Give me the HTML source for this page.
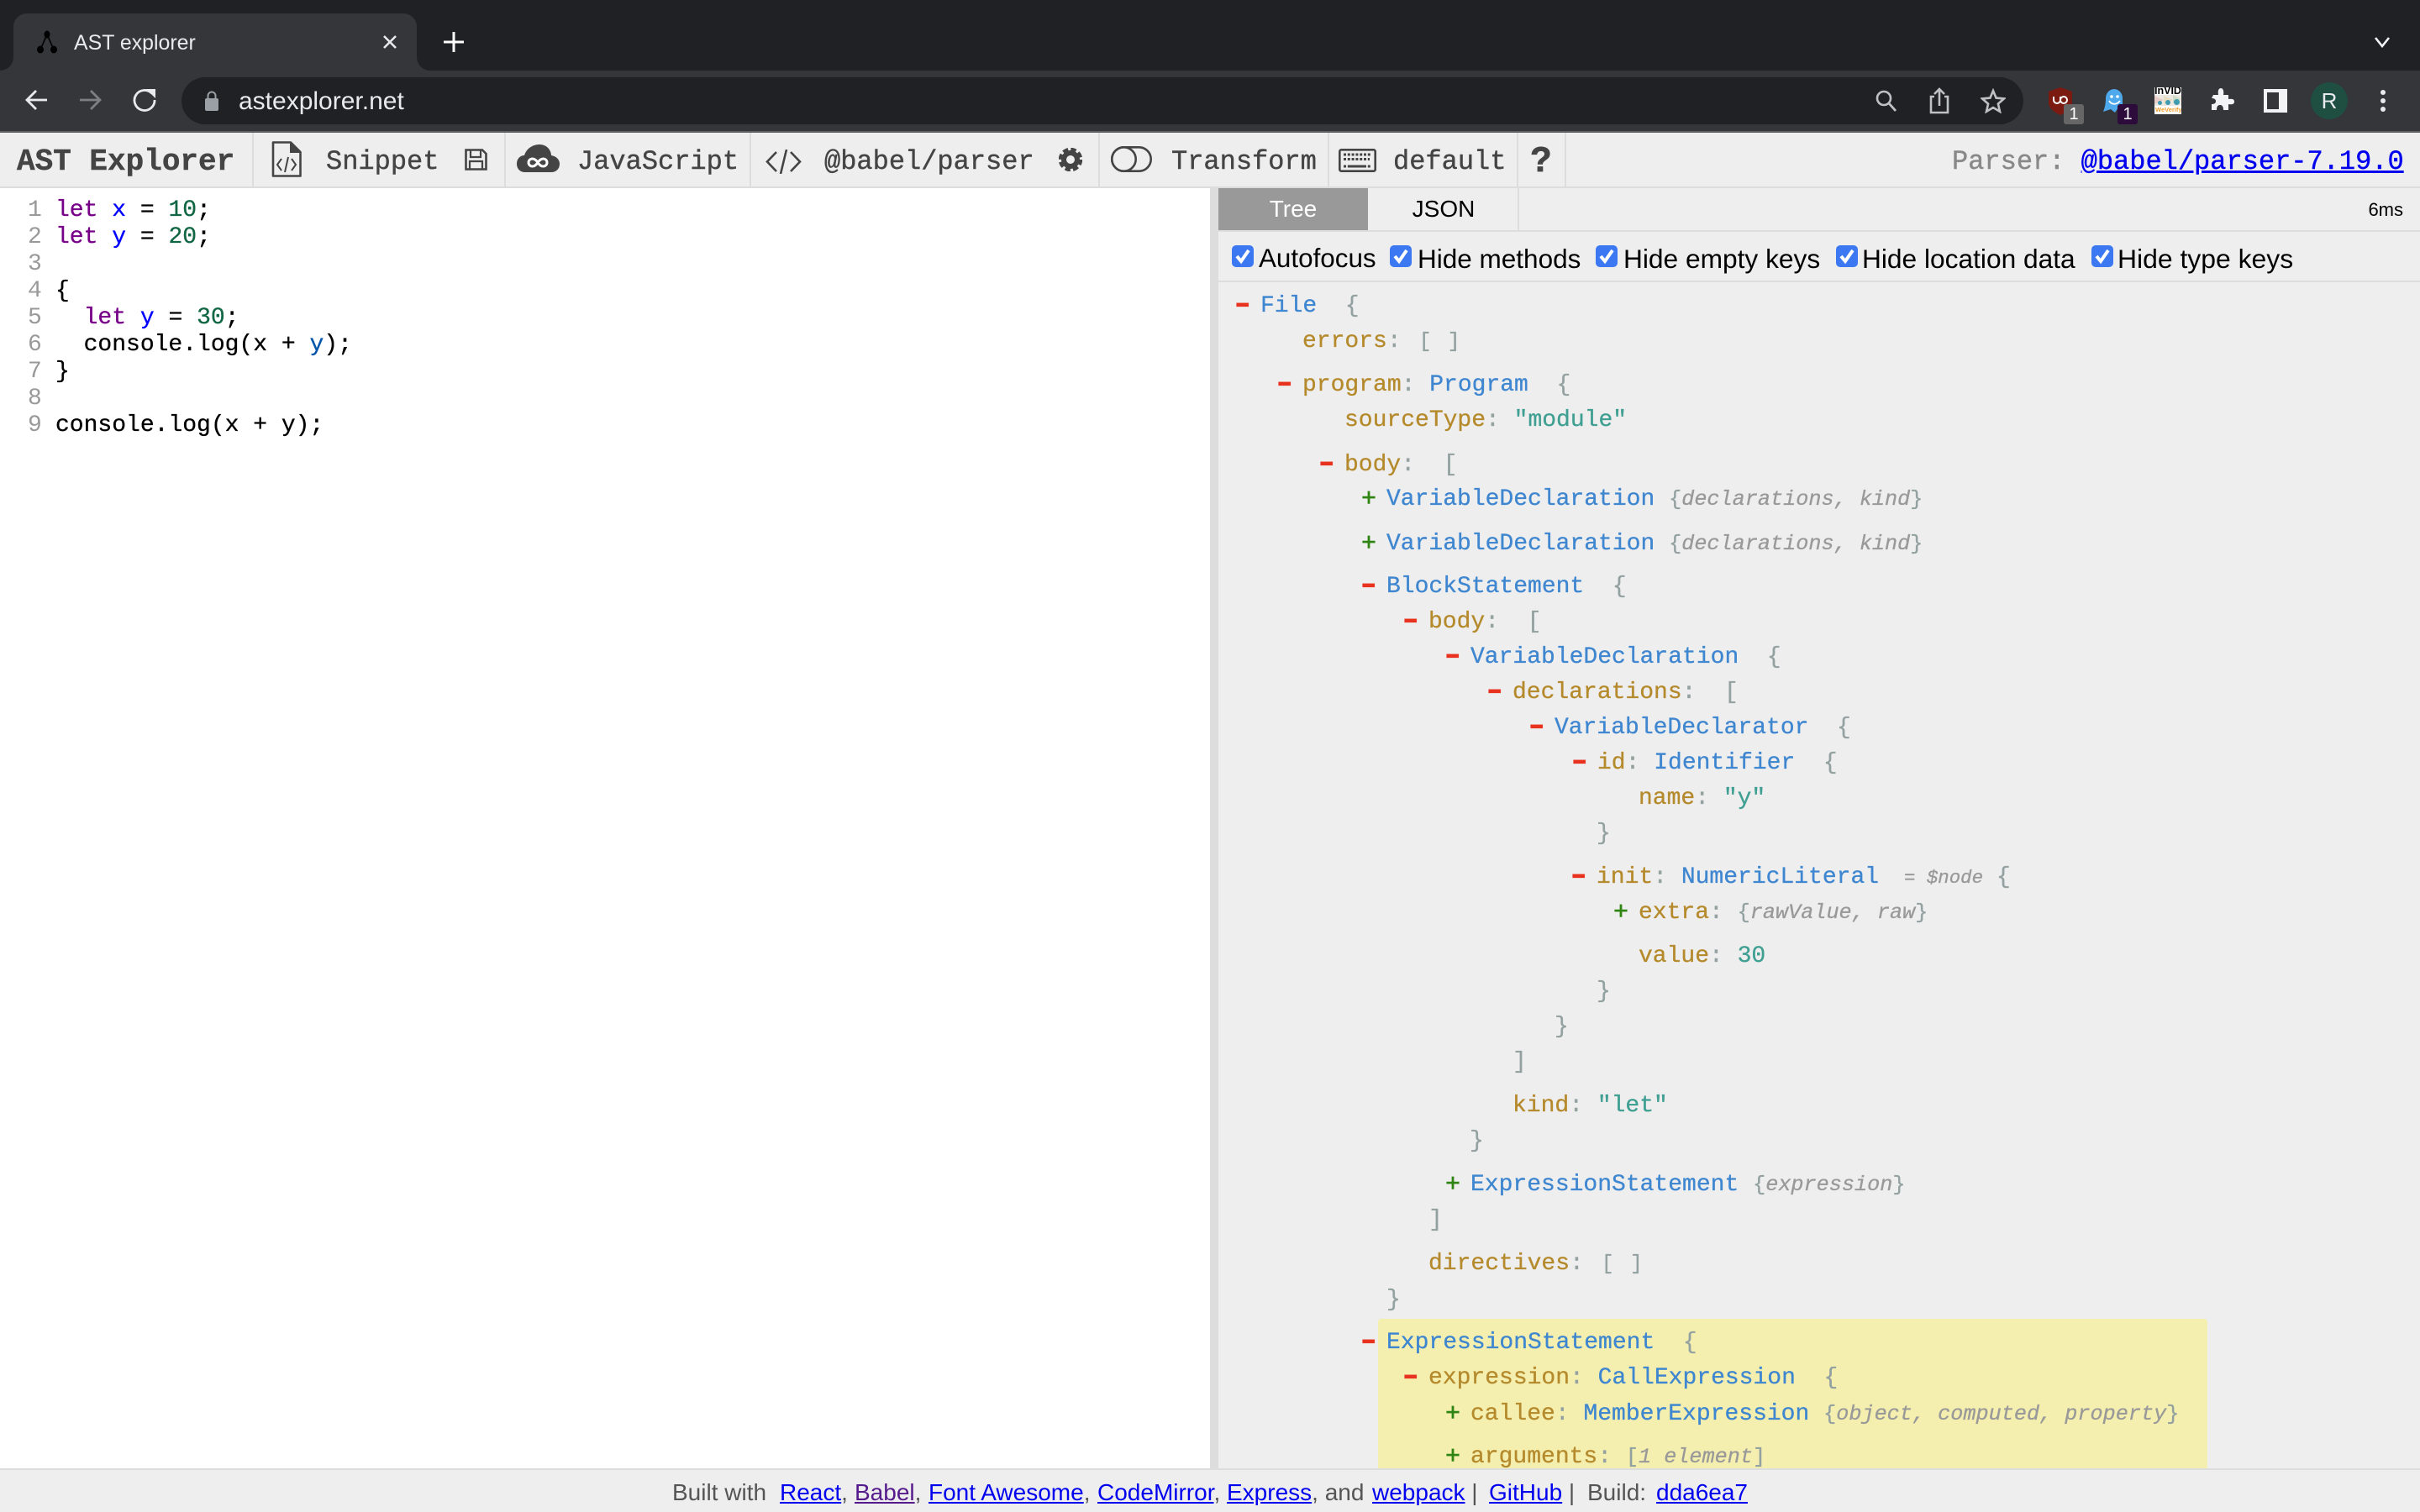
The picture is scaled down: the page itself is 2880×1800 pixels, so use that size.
<!DOCTYPE html>
<html><head><meta charset="utf-8"><title>AST explorer</title>
<style>
*{box-sizing:border-box}
html,body{margin:0;padding:0;width:2880px;height:1800px;overflow:hidden;background:#eee}
.a{position:absolute}
.sans{font-family:"Liberation Sans",sans-serif}
.mono{font-family:"Liberation Mono",monospace}
.tb{position:absolute;top:161px;font:32px/64px "Liberation Mono",monospace;color:#444;white-space:pre;-webkit-text-stroke:.4px currentColor}
.sep{position:absolute;top:158px;height:64px;width:2px;background:#ddd}
.l{position:absolute;left:66px;font:28px/32px "Liberation Mono",monospace;white-space:pre;color:#000;-webkit-text-stroke:.3px currentColor}
.n{position:absolute;left:33px;font:28px/32px "Liberation Mono",monospace;color:#999}
.kw{color:#708}.def{color:#00f}.num{color:#164}.v2{color:#05a}
.r{position:absolute;font:28px/42px "Liberation Mono",monospace;white-space:pre;color:#93a1a1;-webkit-text-stroke:.3px currentColor}
.k{color:#b58a2c}.t{color:#3e86d0}.s{color:#3f9f92}.ph{font-size:25.2px}.ph i{color:#999}
.br{font-size:25.2px;word-spacing:4px;margin-left:4px}
.m{position:absolute;font:bold 36px/42px "Liberation Mono",monospace;color:#e8321f;margin-left:-32px;margin-top:-2px;transform:scaleX(1.4)}
.p{position:absolute;font:normal 30px/42px "Liberation Mono",monospace;color:#2f8412;margin-left:-30px;-webkit-text-stroke:.6px currentColor}
.cb{position:absolute;top:292px;width:26px;height:26px;border-radius:5px;background:#3b78f2}
.lb{position:absolute;top:290px;font:31.7px/36px "Liberation Sans",sans-serif;color:#000;white-space:pre}
.f{position:absolute;top:1760px;font:28px/34px "Liberation Sans",sans-serif;color:#555;white-space:pre}
.f a{color:#00e;text-decoration:underline}
.f a.vis{color:#551a8b}
</style></head>
<body>
<!-- browser chrome -->
<div class="a" style="left:0;top:0;width:2880px;height:84px;background:#202124"></div>
<div class="a" style="left:0;top:84px;width:2880px;height:72px;background:#35363a"></div>
<div class="a" style="left:0;top:156px;width:2880px;height:2px;background:#5f6063"></div>
<div class="a" style="left:0;top:68px;width:16px;height:16px;background:#35363a"></div>
<div class="a" style="left:0;top:68px;width:16px;height:16px;background:#202124;border-bottom-right-radius:16px"></div>
<div class="a" style="left:496px;top:68px;width:16px;height:16px;background:#35363a"></div>
<div class="a" style="left:496px;top:68px;width:16px;height:16px;background:#202124;border-bottom-left-radius:16px"></div>
<div class="a" style="left:16px;top:16px;width:480px;height:68px;background:#35363a;border-radius:16px 16px 0 0"></div>
<svg class="a" style="left:42px;top:34px" width="30" height="32" viewBox="0 0 30 32"><g fill="#000" stroke="#000"><ellipse cx="14" cy="7" rx="3" ry="4"/><ellipse cx="6" cy="25" rx="3.500" ry="4"/><ellipse cx="22" cy="25" rx="3.500" ry="4"/><path d="M14 7L6 25M14 7L22 25" stroke-width="1.600" fill="none"/></g></svg>
<div class="a sans" style="left:88px;top:35px;font-size:24.9px;line-height:32px;color:#e8eaed">AST explorer</div>
<svg class="a" style="left:454px;top:40px" width="20" height="20" viewBox="0 0 20 20"><path d="M3 3L17 17M17 3L3 17" stroke="#e8eaed" stroke-width="2.600"/></svg>
<svg class="a" style="left:528px;top:38px" width="24" height="24" viewBox="0 0 24 24"><path d="M12 0V24M0 12H24" stroke="#fff" stroke-width="3"/></svg>
<svg class="a" style="left:2825px;top:43px" width="20" height="14" viewBox="0 0 20 14"><path d="M2 2L10 12L18 2" fill="none" stroke="#f1f3f4" stroke-width="2.600"/></svg>
<!-- nav -->
<svg class="a" style="left:29px;top:105px" width="28" height="28" viewBox="0 0 28 28"><path d="M27 14H3M14 3L3 14L14 25" fill="none" stroke="#e8eaed" stroke-width="2.800"/></svg>
<svg class="a" style="left:94px;top:105px" width="28" height="28" viewBox="0 0 28 28"><path d="M1 14H25M14 3L25 14L14 25" fill="none" stroke="#7d7f83" stroke-width="2.800"/></svg>
<svg class="a" style="left:158px;top:105px" width="28" height="28" viewBox="0 0 28 28"><path d="M23 6.500A12 12 0 1 0 26 14" fill="none" stroke="#e8eaed" stroke-width="2.800"/><path d="M16 1L27 1L27 12Z" fill="#e8eaed"/></svg>
<div class="a" style="left:216px;top:92px;width:2192px;height:56px;border-radius:28px;background:#202124"></div>
<svg class="a" style="left:244px;top:108px" width="16" height="24" viewBox="0 0 16 24"><rect x="0" y="9" width="16" height="15" rx="2" fill="#9aa0a6"/><path d="M3.500 10V6A4.500 4.500 0 0 1 12.500 6V10" fill="none" stroke="#9aa0a6" stroke-width="2"/></svg>
<div class="a sans" style="left:284px;top:103px;font-size:30px;line-height:36px;color:#e8eaed">astexplorer.net</div>
<svg class="a" style="left:2231px;top:106px" width="28" height="28" viewBox="0 0 28 28"><circle cx="11" cy="11" r="8" fill="none" stroke="#bdc1c6" stroke-width="2.600"/><path d="M17 17L25 26" stroke="#bdc1c6" stroke-width="2.800"/></svg>
<svg class="a" style="left:2295px;top:104px" width="26" height="32" viewBox="0 0 26 32"><path d="M7 11H3V30H23V11H19" fill="none" stroke="#bdc1c6" stroke-width="2.600"/><path d="M13 22V3M7 8L13 2L19 8" fill="none" stroke="#bdc1c6" stroke-width="2.600"/></svg>
<svg class="a" style="left:2357px;top:105px" width="30" height="30" viewBox="0 0 30 30"><path d="M15 3L18.600 11.600L28 12.400L20.900 18.600L23 27.800L15 23L7 27.800L9.100 18.600L2 12.400L11.400 11.600Z" fill="none" stroke="#bdc1c6" stroke-width="2.600"/></svg>
<!-- extensions -->
<svg class="a" style="left:2437px;top:104px" width="30" height="33" viewBox="0 0 30 33"><path d="M15 0L29 5V18C29 25 22 30 15 33C8 30 1 25 1 18V5Z" fill="#7b1a10"/><path d="M7 11V15A4 4 0 0 0 15 15V11" fill="none" stroke="#fff" stroke-width="2"/><circle cx="19" cy="15" r="4" fill="none" stroke="#fff" stroke-width="2"/></svg>
<div class="a sans" style="left:2456px;top:124px;width:24px;height:24px;background:#666;border-radius:3px;color:#fff;font-size:20px;line-height:24px;text-align:center">1</div>
<svg class="a" style="left:2503px;top:106px" width="24" height="30" viewBox="0 0 24 30"><path d="M3 11A10 11 0 0 1 23 11V23L18 22L14 28L9 24L0 27C2 22 3 17 3 11Z" fill="#4ea8ec"/><circle cx="10" cy="9" r="1.800" fill="#fff"/><circle cx="17" cy="9" r="1.800" fill="#fff"/><path d="M7 14C10 19 16 19 20 14" fill="none" stroke="#fff" stroke-width="1.800"/></svg>
<div class="a sans" style="left:2520px;top:124px;width:24px;height:24px;background:#2d0b3a;border-radius:3px;color:#fff;font-size:20px;line-height:24px;text-align:center">1</div>
<div class="a" style="left:2564px;top:104px;width:32px;height:32px;background:#ece8e2;overflow:hidden">
<svg class="a" style="left:0;top:8px" width="32" height="14" viewBox="0 0 32 14"><path d="M0 2L11 7L0 12Z" fill="#e8cdc8"/><path d="M11 2L22 7L11 12Z" fill="#e6dcc0"/><path d="M22 1L32 6L22 11Z" fill="#cfdcc8"/></svg>
<div class="a" style="left:0;top:0;width:32px;height:9px;background:#fff"></div>
<div class="a sans" style="left:0;top:-2px;font-size:12.500px;line-height:12px;color:#000;font-weight:bold;white-space:pre">InVID</div>
<div class="a" style="left:4px;top:16px;width:5px;height:5px;border-radius:3px;background:#3e9bb0"></div>
<div class="a" style="left:13px;top:15px;width:6px;height:6px;border-radius:3px;background:#3e9bb0"></div>
<div class="a" style="left:23px;top:14px;width:7px;height:7px;border-radius:4px;background:#3e9bb0"></div>
<div class="a" style="left:0;top:22px;width:32px;height:10px;background:#fff"></div>
<div class="a sans" style="left:1px;top:22px;font-size:7.500px;line-height:10px;color:#f0a030;font-weight:bold;white-space:pre">WeVerify</div>
</div>
<svg class="a" style="left:2631px;top:105px" width="28" height="28" viewBox="0 0 28 28"><path d="M3 8H9C8 2 10 0 12 0S16 2 15 8H21V13C27 12 28 14 28 16S27 20 21 19V26H15C15 21 13 20 11 20S7 21 7 26H1V19C4 19 6 18 6 15.500S4 12 1 12Z" fill="#f1f3f4"/></svg>
<div class="a" style="left:2694px;top:106px;width:28px;height:28px;background:#f1f3f4"></div>
<div class="a" style="left:2698px;top:110px;width:14px;height:20px;background:#35363a"></div>
<div class="a sans" style="left:2750px;top:98px;width:44px;height:44px;border-radius:50%;background:#1f4f41;color:#e8eaed;font-size:26px;line-height:44px;text-align:center">R</div>
<div class="a" style="left:2833px;top:107px;width:6px;height:6px;border-radius:50%;background:#e8eaed"></div>
<div class="a" style="left:2833px;top:117px;width:6px;height:6px;border-radius:50%;background:#e8eaed"></div>
<div class="a" style="left:2833px;top:127px;width:6px;height:6px;border-radius:50%;background:#e8eaed"></div>

<!-- app toolbar -->
<div class="a" style="left:0;top:158px;width:2880px;height:64px;background:#eee"></div>
<div class="a" style="left:0;top:222px;width:2880px;height:2px;background:#ddd"></div>
<div class="sep" style="left:300px"></div><div class="sep" style="left:600px"></div><div class="sep" style="left:892px"></div><div class="sep" style="left:1307px"></div><div class="sep" style="left:1580px"></div><div class="sep" style="left:1805px"></div><div class="sep" style="left:1862px"></div>
<div class="tb" style="left:20px;top:161px;font-size:36px;font-weight:bold">AST Explorer</div>
<svg class="a" style="left:323px;top:168px" width="36" height="43" viewBox="0 0 36 43"><path d="M2 1.500H23L34.500 13V41.500H2Z" fill="none" stroke="#444" stroke-width="2.600" stroke-linejoin="round"/><path d="M23 1.500V13H34.500" fill="#444" stroke="#444" stroke-width="2"/><path d="M12 21L7 28L12 35M24 21L29 28L24 35M20 19L16 37" fill="none" stroke="#444" stroke-width="2"/></svg>
<div class="tb" style="left:388px">Snippet</div>
<svg class="a" style="left:553px;top:177px" width="27" height="26" viewBox="0 0 27 26"><path d="M1.500 1.500H21L25.500 6V24.500H1.500Z" fill="none" stroke="#444" stroke-width="2.600"/><path d="M7 2V10H19V2M6 24V15H21V24" fill="none" stroke="#444" stroke-width="2.200"/></svg>
<svg class="a" style="left:615px;top:172px" width="51" height="33" viewBox="0 0 51 33"><path d="M10 33C3 33 0 28 0 23C0 17 4 13 9 13C11 6 18 0 27 0C36 0 41 7 41 13C47 14 51 18 51 23C51 29 47 33 41 33Z" fill="#444"/><path d="M25 21.500C23 18.500 20.500 17 18.500 17C16 17 14 19 14 21.500S16 26 18.500 26C20.500 26 23 24.500 25 21.500C27 18.500 29.500 17 31.500 17C34 17 36 19 36 21.500S34 26 31.500 26C29.500 26 27 24.500 25 21.500Z" fill="none" stroke="#fff" stroke-width="3"/></svg>
<div class="tb" style="left:687px">JavaScript</div>
<svg class="a" style="left:911px;top:178px" width="43" height="29" viewBox="0 0 43 29"><path d="M13 3L2 14.500L13 26M30 3L41 14.500L30 26M25 0L18 29" fill="none" stroke="#444" stroke-width="2.600"/></svg>
<div class="tb" style="left:981px">@babel/parser</div>
<svg class="a" style="left:1260px;top:176px" width="28" height="28" viewBox="0 0 28 28"><circle cx="14" cy="14" r="8" fill="none" stroke="#444" stroke-width="6"/><circle cx="14" cy="14" r="12" fill="none" stroke="#444" stroke-width="4.500" stroke-dasharray="6.300 3.120"/></svg>
<svg class="a" style="left:1322px;top:174px" width="49" height="31" viewBox="0 0 49 31"><rect x="1.300" y="1.300" width="46.400" height="28.400" rx="14.200" fill="none" stroke="#444" stroke-width="2.600"/><circle cx="15.500" cy="15.500" r="14.200" fill="#eee" stroke="#444" stroke-width="2.600"/></svg>
<div class="tb" style="left:1394px">Transform</div>
<svg class="a" style="left:1593px;top:177px" width="45" height="28" viewBox="0 0 45 28"><rect x="1.300" y="1.300" width="42.400" height="25.400" rx="2" fill="none" stroke="#444" stroke-width="2.600"/><path d="M6 7H38M6 12.500H37M6 21H39" stroke="#444" stroke-width="3" stroke-dasharray="3 1.800"/><path d="M11 21H33" stroke="#444" stroke-width="3"/></svg>
<div class="tb" style="left:1658px">default</div>
<div class="a sans" style="left:1821px;top:166px;width:24px;font-size:42px;line-height:48px;font-weight:bold;color:#444;text-align:center;-webkit-text-stroke:.8px #444">?</div>
<div class="tb" style="left:2323px;color:#888">Parser: <a style="color:#00e;text-decoration:underline">@babel/parser-7.19.0</a></div>

<!-- editor -->
<div class="a" style="left:0;top:224px;width:1440px;height:1524px;background:#fff"></div>
<div class="a" style="left:1440px;top:224px;width:10px;height:1524px;background:#ddd"></div>
<div class="n" style="top:235px">1</div><div class="l" style="top:235px"><span class="kw">let</span> <span class="def">x</span> = <span class="num">10</span>;</div>
<div class="n" style="top:267px">2</div><div class="l" style="top:267px"><span class="kw">let</span> <span class="def">y</span> = <span class="num">20</span>;</div>
<div class="n" style="top:299px">3</div>
<div class="n" style="top:331px">4</div><div class="l" style="top:331px">{</div>
<div class="n" style="top:363px">5</div><div class="l" style="top:363px">  <span class="kw">let</span> <span class="def">y</span> = <span class="num">30</span>;</div>
<div class="n" style="top:395px">6</div><div class="l" style="top:395px">  console.log(x + <span class="v2">y</span>);</div>
<div class="n" style="top:427px">7</div><div class="l" style="top:427px">}</div>
<div class="n" style="top:459px">8</div>
<div class="n" style="top:491px">9</div><div class="l" style="top:491px">console.log(x + y);</div>

<!-- right pane tabs -->
<div class="a sans" style="left:1450px;top:224px;width:178px;height:50px;background:#999;color:#fff;font-size:28px;line-height:50px;text-align:center">Tree</div>
<div class="a sans" style="left:1629px;top:224px;width:178px;height:50px;color:#000;font-size:28px;line-height:50px;text-align:center">JSON</div>
<div class="a" style="left:1806px;top:224px;width:2px;height:50px;background:#ddd"></div>
<div class="a" style="left:1450px;top:274px;width:1430px;height:2px;background:#ddd"></div>
<div class="a sans" style="right:20px;top:236px;font-size:22px;line-height:28px;color:#000">6ms</div>

<!-- options -->
<div class="cb" style="left:1466px"></div><div class="cb" style="left:1654px"></div><div class="cb" style="left:1899px"></div><div class="cb" style="left:2185px"></div><div class="cb" style="left:2489px"></div>
<svg class="a" style="left:1466px;top:292px" width="1050" height="26" viewBox="0 0 1050 26"><g fill="none" stroke="#fff" stroke-width="4"><path d="M6 13L11 19L20 6"/><path d="M194 13L199 19L208 6"/><path d="M439 13L444 19L453 6"/><path d="M725 13L730 19L739 6"/><path d="M1029 13L1034 19L1043 6"/></g></svg>
<div class="lb" style="left:1498px;font-size:31.4px">Autofocus</div>
<div class="lb" style="left:1687px;font-size:31.5px">Hide methods</div>
<div class="lb" style="left:1932px">Hide empty keys</div>
<div class="lb" style="left:2216px">Hide location data</div>
<div class="lb" style="left:2520px;font-size:31.9px">Hide type keys</div>
<div class="a" style="left:1450px;top:334px;width:1430px;height:2px;background:#ddd"></div>

<!-- tree -->
<div class="a" style="left:0;top:0;width:2880px;height:1748px;overflow:hidden">
<div class="a" style="left:1640px;top:1570px;width:987px;height:200px;background:#f4efaf;border-radius:4px"></div>
<div class="r" style="left:1500px;top:344px"><span class="m" style="left:0">-</span><span class="t">File</span>  {</div>
<div class="r" style="left:1550px;top:386px"><span class="k">errors</span>: <span class="br">[ ]</span></div>
<div class="r" style="left:1550px;top:438px"><span class="m" style="left:0">-</span><span class="k">program</span>: <span class="t">Program</span>  {</div>
<div class="r" style="left:1600px;top:480px"><span class="k">sourceType</span>: <span class="s">"module"</span></div>
<div class="r" style="left:1600px;top:533px"><span class="m" style="left:0">-</span><span class="k">body</span>:  [</div>
<div class="r" style="left:1650px;top:574px"><span class="p" style="left:0">+</span><span class="t">VariableDeclaration</span> <span class="ph">{<i>declarations, kind</i>}</span></div>
<div class="r" style="left:1650px;top:627px"><span class="p" style="left:0">+</span><span class="t">VariableDeclaration</span> <span class="ph">{<i>declarations, kind</i>}</span></div>
<div class="r" style="left:1650px;top:678px"><span class="m" style="left:0">-</span><span class="t">BlockStatement</span>  {</div>
<div class="r" style="left:1700px;top:720px"><span class="m" style="left:0">-</span><span class="k">body</span>:  [</div>
<div class="r" style="left:1750px;top:762px"><span class="m" style="left:0">-</span><span class="t">VariableDeclaration</span>  {</div>
<div class="r" style="left:1800px;top:804px"><span class="m" style="left:0">-</span><span class="k">declarations</span>:  [</div>
<div class="r" style="left:1850px;top:846px"><span class="m" style="left:0">-</span><span class="t">VariableDeclarator</span>  {</div>
<div class="r" style="left:1901px;top:888px"><span class="m" style="left:0">-</span><span class="k">id</span>: <span class="t">Identifier</span>  {</div>
<div class="r" style="left:1950px;top:930px"><span class="k">name</span>: <span class="s">"y"</span></div>
<div class="r" style="left:1900px;top:972px">}</div>
<div class="r" style="left:1900px;top:1024px"><span class="m" style="left:0">-</span><span class="k">init</span>: <span class="t">NumericLiteral</span></div>
<div class="r" style="left:2266px;top:1024px;font-size:22.400px;font-style:italic;color:#999">= $node</div>
<div class="r" style="left:2376px;top:1024px">{</div>
<div class="r" style="left:1950px;top:1066px"><span class="p" style="left:0">+</span><span class="k">extra</span>: <span class="ph">{<i>rawValue, raw</i>}</span></div>
<div class="r" style="left:1950px;top:1118px"><span class="k">value</span>: <span class="s">30</span></div>
<div class="r" style="left:1900px;top:1160px">}</div>
<div class="r" style="left:1850px;top:1202px">}</div>
<div class="r" style="left:1800px;top:1244px">]</div>
<div class="r" style="left:1800px;top:1296px"><span class="k">kind</span>: <span class="s">"let"</span></div>
<div class="r" style="left:1749px;top:1338px">}</div>
<div class="r" style="left:1750px;top:1390px"><span class="p" style="left:0">+</span><span class="t">ExpressionStatement</span> <span class="ph">{<i>expression</i>}</span></div>
<div class="r" style="left:1700px;top:1432px">]</div>
<div class="r" style="left:1700px;top:1484px"><span class="k">directives</span>: <span class="br">[ ]</span></div>
<div class="r" style="left:1650px;top:1527px">}</div>
<div class="r" style="left:1650px;top:1578px"><span class="m" style="left:0">-</span><span class="t">ExpressionStatement</span>  {</div>
<div class="r" style="left:1700px;top:1620px"><span class="m" style="left:0">-</span><span class="k">expression</span>: <span class="t">CallExpression</span>  {</div>
<div class="r" style="left:1750px;top:1663px"><span class="p" style="left:0">+</span><span class="k">callee</span>: <span class="t">MemberExpression</span> <span class="ph">{<i>object, computed, property</i>}</span></div>
<div class="r" style="left:1750px;top:1714px"><span class="p" style="left:0">+</span><span class="k">arguments</span>: <span class="ph">[<i>1 element</i>]</span></div>
</div>

<!-- footer -->
<div class="a" style="left:0;top:1748px;width:2880px;height:2px;background:#ddd"></div>
<div class="f" style="left:800px">Built with</div>
<div class="f" style="left:928px"><a>React</a>,</div>
<div class="f" style="left:1017px"><a class="vis">Babel</a>,</div>
<div class="f" style="left:1105px"><a>Font Awesome</a>,</div>
<div class="f" style="left:1306px"><a>CodeMirror</a>,</div>
<div class="f" style="left:1460px"><a>Express</a>, and</div>
<div class="f" style="left:1633px"><a>webpack</a> |</div>
<div class="f" style="left:1772px"><a>GitHub</a> |</div>
<div class="f" style="left:1889px">Build:</div>
<div class="f" style="left:1971px"><a>dda6ea7</a></div>
</body></html>
